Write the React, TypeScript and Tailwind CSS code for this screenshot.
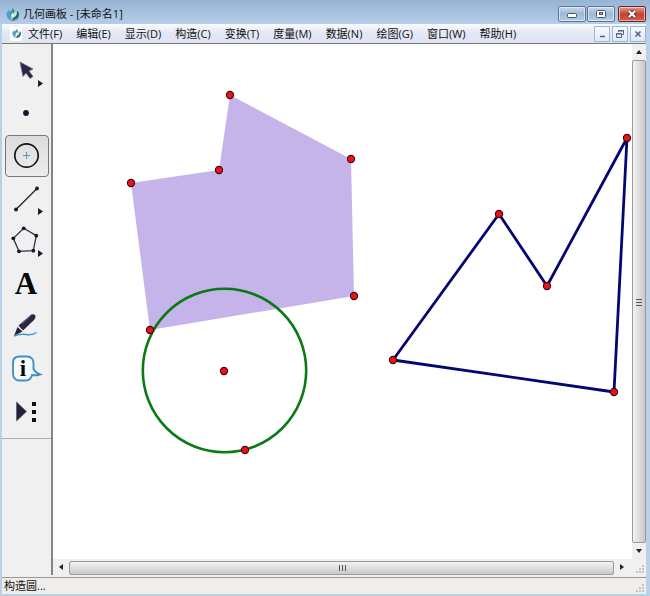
import type { ReactNode } from "react";
import clsx from "clsx";

const menus = [
  "文件(F)",
  "编辑(E)",
  "显示(D)",
  "构造(C)",
  "变换(T)",
  "度量(M)",
  "数据(N)",
  "绘图(G)",
  "窗口(W)",
  "帮助(H)",
];

const purple = [[78, 139], [166, 126], [177, 51], [298, 115], [301, 252], [97, 286]];
const navy = [[340, 316], [446, 170], [494, 242], [574, 94], [561, 348]];
const circlePoints = [[171, 327], [192, 406]];

function Logo({ size }: { size: number }) {
  return (
    <svg width={size} height={size} viewBox="0 0 14 14" aria-hidden="true">
      <path d="M4 2C1 3 0 6 1 9c1 3 3 5 6 5-2-2-3-4-3-6 0-3 0-4 0-6z" fill="#4f9fc4" />
      <path d="M7 0c3 2 3 5 1 7-1 1-2 2-1 4-3-1-4-3-3-6 1-2 3-3 3-5z" fill="#3b93b5" />
      <path d="M7 5c-2 2-2 4 0 6l2 1c-1-2-1-3 0-5z" fill="#e4f3f8" />
      <path d="M7 14c4 0 7-3 7-7 0-2-1-3-2-4 0 3-1 6-4 7-1 2-2 3-1 4z" fill="#1e6487" />
      <path d="M9 4c2 0 3 2 2 4-1 1-2 2-3 2 0-2 1-4 1-6z" fill="#d3e4b0" />
      <path d="M6 13c3 0 5-1 6-3 0 3-3 4-6 3z" fill="#b3ba3e" />
    </svg>
  );
}

function Dots({ points }: { points: number[][] }) {
  return (
    <>
      {points.map(([x, y]) => (
        <circle key={`${x}-${y}`} cx={x} cy={y} r="3.6" fill="#f0101c" stroke="#3a0508" strokeWidth="1.1" />
      ))}
    </>
  );
}

function Flyout() {
  return <path d="M34 30v7l5-3.500z" fill="#1d1c33" />;
}

const pentagon = [[19.7, 8.3], [32.3, 15.7], [29.3, 30.7], [15, 31.3], [9.3, 18.3]];

const tools: { name: string; icon: ReactNode }[] = [
  {
    name: "选择",
    icon: (
      <>
        <path
          d="M16 12l3 14.500 3-3.500 4 5.500 3-2-4-5.500 4-2z"
          fill="#292742"
          stroke="#6d6b84"
          strokeWidth=".8"
        />
        <Flyout />
      </>
    ),
  },
  { name: "点", icon: <circle cx="22" cy="20" r="2.900" fill="#16152b" /> },
  {
    name: "圆",
    icon: (
      <>
        <circle cx="22.500" cy="20.500" r="11.700" fill="none" stroke="#151515" strokeWidth="1.700" />
        <path d="M22.500 17v7M19 20.500h7" stroke="#4a9cc4" />
      </>
    ),
  },
  {
    name: "线段",
    icon: (
      <>
        <path d="M12 31.500l21-21" stroke="#22212f" strokeWidth="1.300" />
        <circle cx="12" cy="31.500" r="1.900" fill="#16152b" />
        <circle cx="33" cy="10.500" r="1.900" fill="#16152b" />
        <Flyout />
      </>
    ),
  },
  {
    name: "多边形",
    icon: (
      <>
        <polygon points={pentagon.join(" ")} fill="none" stroke="#333241" strokeWidth="1.300" />
        {pentagon.map(([x, y]) => (
          <circle key={x} cx={x} cy={y} r="1.900" fill="#16152b" />
        ))}
        <Flyout />
      </>
    ),
  },
  {
    name: "文本",
    icon: (
      <text x="22" y="32" textAnchor="middle" className="font-['Liberation_Serif',serif] text-[31px] font-bold" fill="#070707">
        A
      </text>
    ),
  },
  {
    name: "标记",
    icon: (
      <>
        <path d="M10 31l3.500-9 5 4.500z" fill="#24223a" />
        <path d="M14.500 20.500L26 10.500c2-2 6-1.500 5.500 1.500-.3 1.800-1.500 3-2.500 4L19 25.500z" fill="#292742" />
        <path d="M13.500 21l6 5.500" stroke="#d8d8e0" strokeWidth=".7" />
        <path d="M18 18.500l9-8" stroke="#8a889b" strokeWidth=".7" />
        <path d="M10 31c4-2 8-2 12-1.500 4 .5 8 0 10.500-2" fill="none" stroke="#4797c9" strokeWidth="1.500" />
      </>
    ),
  },
  {
    name: "信息",
    icon: (
      <>
        <path
          d="M15.500 9.500h7.500c4 0 6.500 3 6.500 6.500v6c1.500 2.500 3.500 4.500 6.500 5.500-3 1-5.500 1-8 .5-1 3.500-3 5.500-6 5.500h-6.500c-4 0-6.500-3-6.500-7V16c0-4 2.500-6.500 6.500-6.500z"
          fill="#f7fbff"
          stroke="#3e8fc7"
          strokeWidth="1.900"
        />
        <text x="19" y="29" textAnchor="middle" className="font-['Liberation_Serif',serif] text-[23px] font-bold" fill="#070707">
          i
        </text>
      </>
    ),
  },
  {
    name: "自定义工具",
    icon: (
      <>
        <path d="M12.500 12v19l10-9.500z" fill="#24223a" stroke="#55536b" strokeWidth=".6" />
        <path d="M28 12h4v4h-4zM28 20h4v4h-4zM28 28h4v4h-4z" fill="#111" />
      </>
    ),
  },
];

function WindowButton({ label, close, children }: { label: string; close?: boolean; children: ReactNode }) {
  return (
    <button
      type="button"
      aria-label={label}
      className={clsx(
        "flex h-4 w-7 items-center justify-center rounded-xs border shadow-[inset_0_0_0_1px_#ffffff80]",
        close
          ? "border-[#61283a] bg-linear-to-b from-[#e29a90] via-[#c9402f] via-50% to-[#d05c48]"
          : "border-[#5c7597] bg-linear-to-b from-[#c8d9ed] via-[#9eb8d5] via-50% to-[#b5cee9]",
      )}
    >
      <svg width="14" height="12" viewBox="0 0 14 12">{children}</svg>
    </button>
  );
}

function DocButton({ label, children }: { label: string; children: ReactNode }) {
  return (
    <button
      type="button"
      aria-label={label}
      className="flex h-4 w-4 items-center justify-center border border-[#9db6d3] bg-linear-to-b from-[#f7fbff] to-[#dce9f7]"
    >
      <svg width="12" height="12" viewBox="0 0 12 12" fill="none" stroke="#53657c">{children}</svg>
    </button>
  );
}

function ScrollArrow({ label, d }: { label: string; d: string }) {
  return (
    <button type="button" aria-label={label} className="flex h-4 w-4 shrink-0 items-center justify-center">
      <svg width="8" height="8" viewBox="0 0 8 8">
        <path d={d} fill="#222" />
      </svg>
    </button>
  );
}

function Grip() {
  return (
    <svg width="8" height="8" viewBox="0 0 8 8" fill="#c6c2bd" aria-hidden="true">
      <path d="M6 0h2v2H6zM3 3h2v2H3zM6 3h2v2H6zM0 6h2v2H0zM3 6h2v2H3zM6 6h2v2H6z" />
    </svg>
  );
}

function TitleBar() {
  return (
    <header className="flex h-6 shrink-0 items-center bg-linear-to-b from-[#98b4d3] to-[#b4cee9] pr-1 pl-1.5">
      <span className="pt-1">
        <Logo size={13} />
      </span>
      <h1 className="ml-1 flex-1 pt-1 text-[11px] leading-5">几何画板 - [未命名1]</h1>
      <div className="flex gap-px pt-1">
        <WindowButton label="最小化">
          <rect x="2.500" y="5.500" width="9" height="4" rx="1" fill="#fff" stroke="#46546a" />
        </WindowButton>
        <WindowButton label="最大化">
          <rect x="2.500" y="2.500" width="9" height="7" rx="1" fill="#fff" stroke="#46546a" />
          <rect x="5.500" y="4.500" width="3" height="2" fill="#9eb8d5" stroke="#46546a" />
        </WindowButton>
        <div className="ml-0.5 flex">
          <WindowButton label="关闭" close>
            <path d="M4 3l6 6M10 3L4 9" stroke="#5b3038" strokeWidth="4" />
            <path d="M4 3l6 6M10 3L4 9" stroke="#fff" strokeWidth="2.200" />
          </WindowButton>
        </div>
      </div>
    </header>
  );
}

function MenuBar() {
  return (
    <nav className="flex h-5 shrink-0 items-center border-b border-[#777] bg-linear-to-b from-[#fbfcfe] via-[#e4e8f5] via-45% to-[#dfe4f3] pl-2">
      <span className="mr-1.5 flex h-3.5 w-3 items-center justify-center rounded-xs bg-white">
        <Logo size={9} />
      </span>
      <div className="flex flex-1 gap-3.5">
        {menus.map((menu) => (
          <button key={menu} type="button" className="text-[11px] leading-4 whitespace-nowrap">
            {menu}
          </button>
        ))}
      </div>
      <div className="flex gap-0.5">
        <DocButton label="最小化文档">
          <path d="M4 8.500h5" strokeWidth="1.500" />
        </DocButton>
        <DocButton label="还原文档">
          <path d="M4.500 4V2.500h5v4H8M4.500 3h5M2.500 5.500h5v4h-5zM2.500 6h5" />
        </DocButton>
        <DocButton label="关闭文档">
          <path d="M3.500 3.500l5 5M8.500 3.500l-5 5" strokeWidth="1.600" />
        </DocButton>
      </div>
    </nav>
  );
}

function Toolbox() {
  return (
    <aside className="w-[51px] shrink-0 border-r-2 border-[#858585] bg-[#f0f0f0]">
      <div className="border-b border-[#aaa] py-1.5">
        <div className="grid h-[382px] grid-rows-9 justify-center">
          {tools.map(({ name, icon }) => (
            <button
              key={name}
              type="button"
              aria-label={name}
              aria-pressed={name === "圆"}
              className={clsx(
                "w-11 overflow-hidden rounded-sm border",
                name === "圆" ? "border-[#777] bg-linear-to-b from-[#dcdcdc] to-[#ededed]" : "border-transparent",
              )}
            >
              <svg width="42" height="40" viewBox="2 1 42 40">{icon}</svg>
            </button>
          ))}
        </div>
      </div>
    </aside>
  );
}

function Sketch() {
  return (
    <main className="min-h-0 min-w-0 flex-1 overflow-hidden bg-white">
      <svg className="block h-full w-full" role="img" aria-label="未命名1">
        <polygon points={purple.join(" ")} fill="#c4b4ea" />
        <circle cx="171.500" cy="326.500" r="81.700" fill="none" stroke="#0b7a14" strokeWidth="2.600" />
        <polygon points={navy.join(" ")} fill="none" stroke="#060673" strokeWidth="2.800" strokeLinejoin="round" />
        <Dots points={[...purple, ...navy, ...circlePoints]} />
      </svg>
    </main>
  );
}

export default function App() {
  return (
    <div className="flex h-screen flex-col overflow-hidden bg-[#b9d1ea] font-['Open_Sans','Noto_Sans_CJK_SC',sans-serif] text-[#111]">
      <TitleBar />
      <div className="mr-1 mb-0.5 ml-0.5 flex min-h-0 flex-1 flex-col bg-[#f0f0f0]">
        <MenuBar />
        <div className="flex min-h-0 flex-1">
          <Toolbox />
          <div className="flex min-w-0 flex-1 flex-col">
            <div className="flex min-h-0 flex-1">
              <Sketch />
              <div className="flex w-3.5 shrink-0 flex-col items-center">
                <ScrollArrow label="向上" d="M4 2l3 4H1z" />
                <div className="flex w-3.5 flex-1 items-center justify-center rounded-xs border border-[#999] bg-linear-to-r from-[#f3f3f3] to-[#c9c9cc]">
                  <svg width="6" height="8" viewBox="0 0 6 8">
                    <path d="M0 1.500h6M0 4.500h6M0 7.500h6" stroke="#555" />
                  </svg>
                </div>
                <ScrollArrow label="向下" d="M1 2h6L4 6z" />
              </div>
            </div>
            <div className="flex h-4 shrink-0 items-end">
              <ScrollArrow label="向左" d="M2 4l4-3v6z" />
              <div className="flex h-3.5 flex-1 items-center justify-center rounded-xs border border-[#999] bg-linear-to-b from-[#f3f3f3] to-[#c9c9cc]">
                <svg width="8" height="6" viewBox="0 0 8 6">
                  <path d="M1.500 0v6M4.500 0v6M7.500 0v6" stroke="#555" />
                </svg>
              </div>
              <ScrollArrow label="向右" d="M6 4L2 1v6z" />
              <div className="flex h-4 w-4 items-end justify-end p-0.5">
                <Grip />
              </div>
            </div>
          </div>
        </div>
        <footer className="mt-0.5 flex h-[17px] shrink-0 items-end justify-between border-t border-[#999] bg-[#f0edeb] pl-0.5">
          <p className="text-[11px] leading-4">构造圆...</p>
          <span className="flex p-0.5">
            <Grip />
          </span>
        </footer>
      </div>
    </div>
  );
}
